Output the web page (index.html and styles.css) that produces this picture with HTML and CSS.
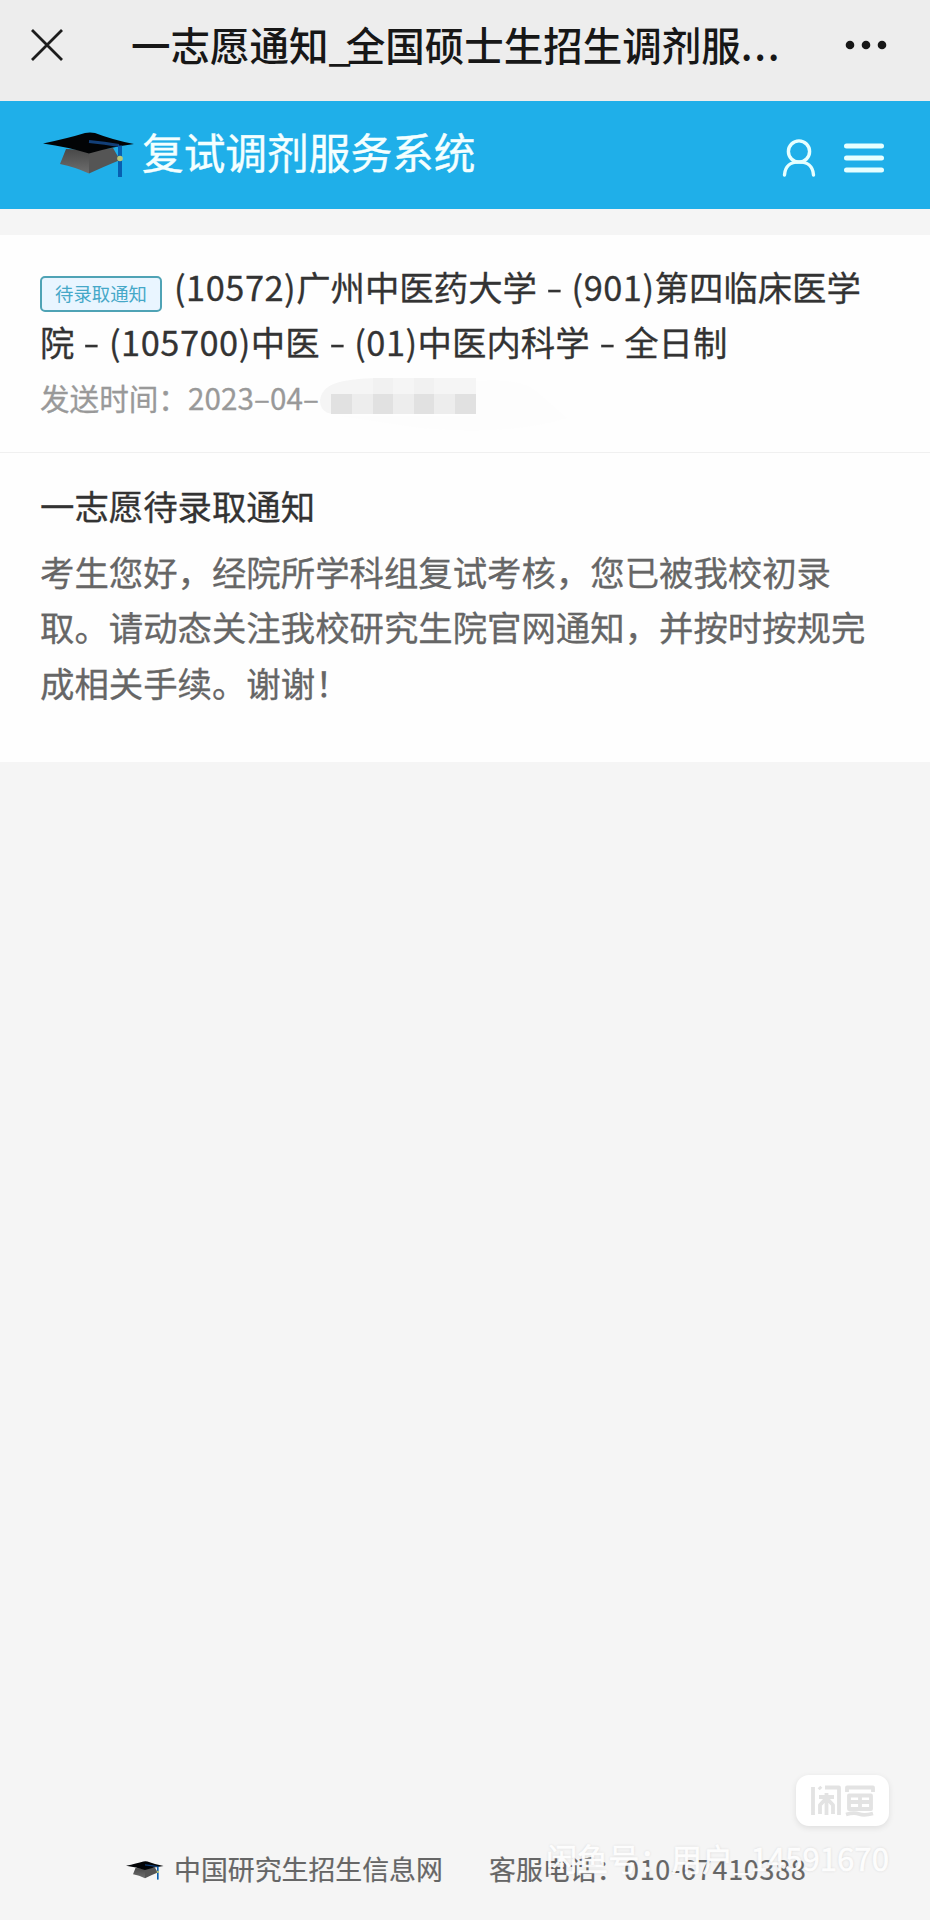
FILE: index.html
```html
<!DOCTYPE html>
<html lang="zh-CN">
<head>
<meta charset="utf-8">
<title>一志愿通知</title>
<link rel="stylesheet" href="styles.css">
</head>
<body>
<svg width="0" height="0" class="defs">
  <defs>
    <linearGradient id="cap-side" x1="0" y1="0" x2="0" y2="1"><stop offset="0" stop-color="#484848"/><stop offset="1" stop-color="#6e6e6e"/></linearGradient>
    <symbol id="cap" viewBox="0 0 92 46">
      <path d="M23 17 17 32Q32 35 46 41.500V18z" fill="url(#cap-side)"/>
      <path d="M46 18V41.500Q60 35 77 28L70 16z" fill="#555"/>
      <path d="M0 11.500Q26 6 42 1Q47 0 52 1Q70 8 91 12Q68 15 46 21.500Q25 15 0 11.500z" fill="#020406"/>
      <path d="M46 9.500Q62 11 76 13.500" fill="none" stroke="#123f78" stroke-width="3"/>
      <path d="M77 13.500V45" fill="none" stroke="#075fb1" stroke-width="4"/>
      <circle cx="77" cy="26.500" r="2.800" fill="#b8c779"/>
    </symbol>
  </defs>
</svg>
<div class="page">
  <header class="browser-bar">
    <svg class="close" viewBox="0 0 34 34"><path d="M2 2 32 32M32 2 2 32"/></svg>
    <h1 class="page-title">一志愿通知<span class="underscore">_</span>全国硕士生招生调剂服<span class="ellipsis">...</span></h1>
    <svg class="more" viewBox="0 0 42 10"><circle cx="5" cy="5" r="4.300"/><circle cx="21" cy="5" r="4.300"/><circle cx="37" cy="5" r="4.300"/></svg>
  </header>
  <nav class="app-bar">
    <svg class="logo"><use href="#cap"/></svg>
    <span class="app-name">复试调剂服务系统</span>
    <svg class="user" viewBox="0 0 34 38"><circle cx="17" cy="12.500" r="10.600"/><path d="M2.500 36C3 27 9 22.900 17 22.900S31 27 31.500 36"/></svg>
    <svg class="menu" viewBox="0 0 40 30"><path d="M2.500 3H37.500M2.500 15H37.500M2.500 27H37.500"/></svg>
  </nav>
  <main class="card">
    <section class="summary">
      <div class="line strong"><span class="tag">待录取通知</span><span class="num">(10572)</span>广州中医药大学<span class="dash">–</span><span class="num">(901)</span>第四临床医学</div>
      <div class="line strong">院<span class="dash">–</span><span class="num">(105700)</span>中医<span class="dash">–</span><span class="num">(01)</span>中医内科学<span class="dash">–</span>全日制</div>
      <div class="line time"><span>发送时间：</span><span class="date">2023–04–</span>
        <svg class="mosaic" viewBox="0 0 250 56"><path d="M0 22Q2 7 24 3Q40 0 60 0H156V36H12Q0 34 0 22z" fill="#f5f5f5"/><path d="M156 3Q200 0 215 12L247 40Q190 58 100 50L20 38H156z" fill="#fdfdfd"/><path d="M53 0h20v16H53zM94 0h20v16H94z" fill="#f1f1f1"/><path d="M11 16h145v20H11z" fill="#ededed"/><path d="M11 16h21v20H11zM53 16h20v20H53zM94 16h20v20H94zM135 16h21v20H135z" fill="#e1e1e1"/></svg>
      </div>
    </section>
    <section class="message">
      <h2 class="line strong heading">一志愿待录取通知</h2>
      <p class="line">考生您好，经院所学科组复试考核，您已被我校初录</p>
      <p class="line">取。请动态关注我校研究生院官网通知，并按时按规完</p>
      <p class="line">成相关手续。谢谢！</p>
    </section>
  </main>
  <footer class="footer">
    <svg class="footer-logo"><use href="#cap"/></svg>
    <span class="site">中国研究生招生信息网</span>
    <span class="phone">客服电话：</span><span class="phone-number">010-67410388</span>
  </footer>
  <div class="watermark">
    <div class="badge">
      <svg viewBox="0 0 64 32"><path d="M2 2V30M8 2 10 4M14 2.500H28V30M15.500 8V30M8 12H23M15.500 13 9 20V29M15.500 13 22 20V29M36 7V2.500H62V7M38 10.500H60V24H38zM38 17H60M49 10V24M35 29.500Q43 27 48 29T62 28.500"/></svg>
    </div>
    <div class="account"><span class="account-label">闲鱼号：</span><span class="account-user">用户</span><span>_14591670</span></div>
  </div>
</div>
</body>
</html>
```
FILE: styles.css
```css
* { box-sizing: border-box; }
body {
  margin: 0;
  background: #f5f5f5;
  color: #666;
  font-family: "Noto Sans CJK SC", sans-serif;
}
h1, h2, p { margin: 0; font-weight: 400; }
svg { flex: none; display: block; }
.defs { position: absolute; }
.page {
  position: relative;
  display: flex;
  flex-direction: column;
  width: 930px;
  height: 1920px;
  overflow: hidden;
  white-space: nowrap;
}
.browser-bar {
  display: flex;
  align-items: center;
  height: 101px;
  padding: 0 43px 11px 30px;
  background: #ededed;
}
.close { width: 34px; height: 34px; fill: none; stroke: #1d1d1d; stroke-width: 2.8; }
.page-title {
  flex: 1;
  margin-left: 67px;
  padding-bottom: 2px;
  color: #171717;
  font-size: 39.5px;
  line-height: 60px;
  font-weight: 500;
}
.underscore { letter-spacing: -5px; }
.ellipsis { letter-spacing: 1.8px; }
.more { width: 42px; height: 10px; fill: #171717; }
.app-bar {
  display: flex;
  align-items: center;
  height: 108px;
  padding: 0 46px 0 43px;
  background: #1fafe9;
}
.logo { width: 92px; height: 46px; }
.app-name {
  flex: 1;
  margin-left: 7px;
  padding-bottom: 8px;
  color: #f4ffff;
  font-size: 41.7px;
  line-height: 60px;
  -webkit-text-stroke: .4px currentColor;
}
.user { width: 34px; height: 38px; margin: 6px 28px 0 0; fill: none; stroke: #e6ffff; stroke-width: 3.4; stroke-linecap: round; }
.menu { width: 40px; height: 30px; margin-top: 5px; fill: none; stroke: #e6ffff; stroke-width: 5; stroke-linecap: round; }
.card {
  height: 527px;
  margin-top: 26px;
  background: #fefefe;
}
.summary { height: 218px; padding: 24px 0 0 40px; border-bottom: 1px solid #f0f0f0; }
.message { padding: 25px 0 0 40px; }
.line {
  display: flex;
  align-items: center;
  height: 55.3px;
  font-size: 34.4px;
  line-height: 55.3px;
  -webkit-text-stroke: .3px currentColor;
}
.strong { color: #333; }
.heading { height: 66px; padding-bottom: 11px; }
.tag {
  width: 122px;
  height: 36px;
  margin: 14px 12px 0 0;
  border: 2px solid #4fa3b5;
  border-radius: 5px;
  background: #e9f5ff;
  color: #45a8c8;
  font-size: 18.4px;
  line-height: 30px;
  text-align: center;
  -webkit-text-stroke: 0;
}
.num { letter-spacing: .5px; }
.dash { width: 34.6px; text-align: center; transform: scaleX(.8); }
.time { color: #999; font-size: 29.6px; }
.date { width: 132px; letter-spacing: .1px; }
.mosaic { width: 250px; height: 56px; margin: 17px 0 0 0; }
.footer {
  display: flex;
  align-items: center;
  height: 60px;
  margin-top: auto;
  margin-bottom: 22px;
  padding-left: 126px;
  font-size: 26.9px;
  -webkit-text-stroke: .2px currentColor;
}
.footer-logo { width: 38px; height: 19px; margin: 4px 10px 0 0; filter: blur(.7px); }
.site { width: 315px; }
.phone { width: 135px; }
.phone-number { letter-spacing: .75px; }
.watermark {
  position: absolute;
  right: 41px;
  bottom: 38px;
  display: flex;
  flex-direction: column;
  align-items: flex-end;
}
.badge {
  display: grid;
  place-items: center;
  width: 93px;
  height: 51px;
  border-radius: 13px;
  background: #fff;
  box-shadow: 0 2px 6px #00000018;
}
.badge svg { width: 64px; height: 32px; fill: none; stroke: #e3e3e3; stroke-width: 3.8; stroke-linejoin: round; }
.account {
  display: flex;
  margin-top: 8px;
  color: #fffffff2;
  font-size: 31.2px;
  line-height: 48px;
  text-shadow: 0 0 3px #00000024;
  -webkit-text-stroke: .5px currentColor;
}
```
